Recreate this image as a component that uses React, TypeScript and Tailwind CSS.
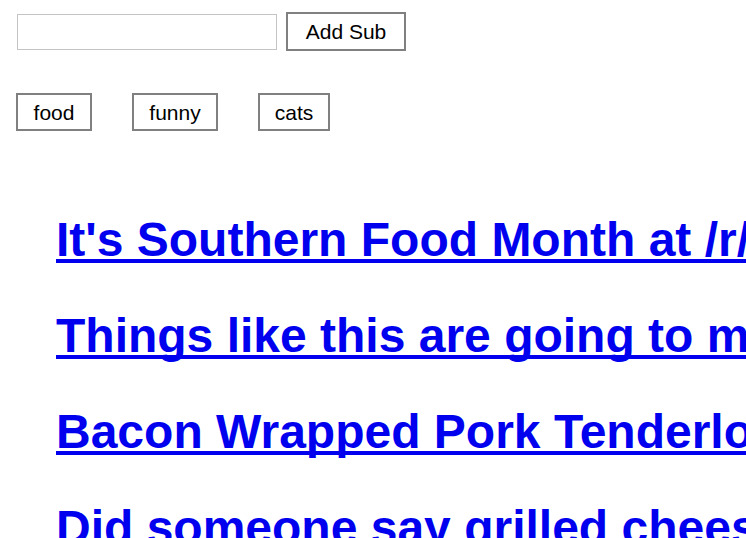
const subs = ["food", "funny", "cats"];
const subWidths: Record<string, string> = {
  food: "w-[76px]",
  funny: "w-[86px]",
  cats: "w-[72px]",
};

const posts = [
  "It's Southern Food Month at /r/food!",
  "Things like this are going to make me fat",
  "Bacon Wrapped Pork Tenderloin",
  "Did someone say grilled cheese?",
];

export default function App() {
  return (
    <div className="h-[538px] w-[746px] overflow-hidden bg-white font-['Liberation_Sans',Arial,sans-serif] text-black">
      <div className="flex items-center pl-[17px] pt-[12px]">
        <input
          type="text"
          className="h-[36px] w-[260px] border border-[#c4c4c4] bg-white px-2 text-[20px] outline-none"
        />
        <button className="ml-[9px] h-[39px] w-[120px] border-2 border-[#808080] bg-white text-[21px] leading-none">
          Add Sub
        </button>
      </div>

      <div className="mt-[42px] flex gap-[40px] pl-[16px]">
        {subs.map((s) => (
          <button
            key={s}
            className={`h-[38px] ${subWidths[s]} border-2 border-[#808080] bg-white text-[21px] leading-none`}
          >
            {s}
          </button>
        ))}
      </div>

      <ul className="mt-[81px] flex flex-col gap-[40px] pl-[56px]">
        {posts.map((p) => (
          <li key={p} className="whitespace-nowrap">
            <a
              href="#"
              className="text-[48px] font-bold leading-[56px] text-[#0000ee] underline decoration-[4px] underline-offset-[3px] [text-decoration-skip-ink:none]"
            >
              {p}
            </a>
          </li>
        ))}
      </ul>
    </div>
  );
}
